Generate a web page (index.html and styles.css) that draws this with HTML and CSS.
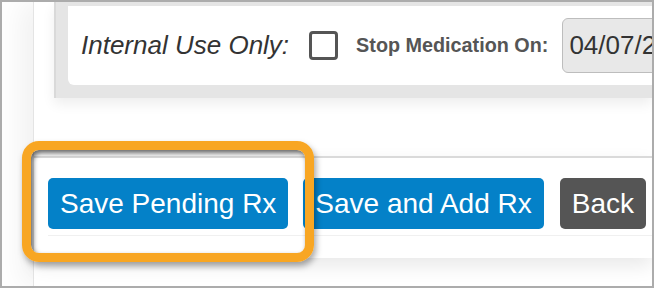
FILE: index.html
```html
<!DOCTYPE html>
<html>
<head>
<meta charset="utf-8">
<link rel="stylesheet" href="styles.css">
</head>
<body>
<div class="frame">
  <div class="panel">
    <div class="form-box">
      <div class="card">
        <span class="internal">Internal Use Only:</span>
        <span class="checkbox"></span>
        <span class="stop-label">Stop Medication On:</span>
        <span class="date-input">04/07/2019</span>
      </div>
    </div>
    <div class="footer">
      <div class="btn-row">
        <button class="btn btn-primary">Save Pending Rx</button>
        <button class="btn btn-primary">Save and Add Rx</button>
        <button class="btn btn-dark">Back</button>
      </div>
    </div>
  </div>
  <div class="highlight"></div>
</div>
</body>
</html>
```
FILE: styles.css
```css
html, body {
  margin: 0;
  padding: 0;
}
body {
  width: 654px;
  height: 288px;
  overflow: hidden;
  font-family: "Liberation Sans", Arial, sans-serif;
  background: #ffffff;
}
.frame {
  position: relative;
  box-sizing: border-box;
  width: 654px;
  height: 288px;
  border: 2px solid #acacac;
  background: #ffffff;
  overflow: hidden;
  padding-left: 31px;
}
.panel {
  height: 100%;
  border-left: 1px solid #e4e4e4;
  background: #ffffff;
  box-shadow: -12px 0 28px rgba(0, 0, 0, 0.06);
}
.form-box {
  margin-left: 20px;
  background: #e5e5e5;
  border-left: 2px solid #d9d9d9;
  padding: 4px 0 13px 12px;
  box-shadow: 0 6px 12px rgba(0, 0, 0, 0.07);
}
.card {
  height: 79px;
  background: #ffffff;
  border-radius: 0 0 0 6px;
  display: flex;
  align-items: center;
  padding-left: 13px;
  white-space: nowrap;
}
.internal {
  font-style: italic;
  font-size: 26px;
  color: #333333;
  margin-right: 20px;
}
.checkbox {
  flex-shrink: 0;
  box-sizing: border-box;
  width: 29px;
  height: 29px;
  border: 3px solid #555555;
  border-radius: 4px;
  margin-right: 18px;
}
.stop-label {
  font-weight: bold;
  font-size: 19.8px;
  color: #555555;
  margin-right: 14px;
}
.date-input {
  flex-shrink: 0;
  box-sizing: border-box;
  width: 160px;
  height: 55px;
  line-height: 53px;
  padding-left: 6px;
  background: #e8e8e8;
  border: 1px solid #bdbdbd;
  border-radius: 6px;
  font-size: 26px;
  color: #333333;
}
.footer {
  margin-top: 58px;
  border-top: 2px solid #dadada;
  padding: 20px 0 22px 14px;
  box-shadow: 0 8px 18px rgba(0, 0, 0, 0.09);
  background: #ffffff;
}
.btn-row {
  display: flex;
  gap: 15px;
  padding-bottom: 6px;
  border-bottom: 1px solid #f0f0f0;
}
.btn {
  font-family: "Liberation Sans", Arial, sans-serif;
  font-size: 28px;
  color: #ffffff;
  border: 0;
  border-radius: 5px;
  height: 51px;
  padding: 0 12px;
  line-height: 51px;
  white-space: nowrap;
}
.btn-primary {
  background: #0481c8;
}
.btn-dark {
  background: #555555;
  margin-left: 1px;
}
.highlight {
  position: absolute;
  left: 20px;
  top: 139px;
  width: 292px;
  height: 121px;
  box-sizing: border-box;
  border: 9px solid #f8a623;
  border-radius: 17px;
  box-shadow: inset 2px 3px 5px rgba(0, 0, 0, 0.6), 2px 4px 6px rgba(0, 0, 0, 0.35);
}
```
